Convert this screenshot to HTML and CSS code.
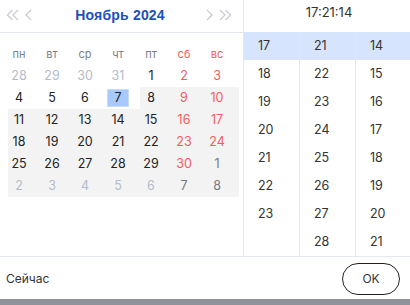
FILE: index.html
```html
<!DOCTYPE html>
<html lang="ru">
  <head>
    <meta charset="UTF-8" />
    <title>Выбор даты</title>
    <link rel="stylesheet" href="styles.css">
  </head>
  <body>
    <div class="picker">
      <div class="picker-body">
        <div class="date-panel">
          <header class="date-header">
            <div class="nav">
              <svg class="nav-btn dbl" width="13" height="12" viewBox="0 0 13 12">
                <path d="M6.5 1 L1.5 6 L6.5 11 M12 1 L7 6 L12 11" />
              </svg>
              <svg class="nav-btn" width="7" height="12" viewBox="0 0 7 12">
                <path d="M6 1 L1 6 L6 11" />
              </svg>
            </div>
            <h1>Ноябрь 2024</h1>
            <div class="nav">
              <svg class="nav-btn" width="7" height="12" viewBox="0 0 7 12">
                <path d="M1 1 L6 6 L1 11" />
              </svg>
              <svg class="nav-btn dbl" width="13" height="12" viewBox="0 0 13 12">
                <path d="M1 1 L6 6 L1 11 M6.5 1 L11.5 6 L6.5 11" />
              </svg>
            </div>
          </header>

          <div class="calendar">
            <div class="week head">
              <div class="cell"><span>пн</span></div>
              <div class="cell"><span>вт</span></div>
              <div class="cell"><span>ср</span></div>
              <div class="cell"><span>чт</span></div>
              <div class="cell"><span>пт</span></div>
              <div class="cell weekend"><span>сб</span></div>
              <div class="cell weekend"><span>вс</span></div>
            </div>
            <div class="week">
              <div class="cell other"><span>28</span></div>
              <div class="cell other"><span>29</span></div>
              <div class="cell other"><span>30</span></div>
              <div class="cell other"><span>31</span></div>
              <div class="cell"><span>1</span></div>
              <div class="cell weekend"><span>2</span></div>
              <div class="cell weekend"><span>3</span></div>
            </div>
            <div class="week">
              <div class="cell"><span>4</span></div>
              <div class="cell"><span>5</span></div>
              <div class="cell"><span>6</span></div>
              <div class="cell selected"><span>7</span></div>
              <div class="cell range"><span>8</span></div>
              <div class="cell weekend range"><span>9</span></div>
              <div class="cell weekend range"><span>10</span></div>
            </div>
            <div class="week range">
              <div class="cell"><span>11</span></div>
              <div class="cell"><span>12</span></div>
              <div class="cell"><span>13</span></div>
              <div class="cell"><span>14</span></div>
              <div class="cell"><span>15</span></div>
              <div class="cell weekend"><span>16</span></div>
              <div class="cell weekend"><span>17</span></div>
            </div>
            <div class="week range">
              <div class="cell"><span>18</span></div>
              <div class="cell"><span>19</span></div>
              <div class="cell"><span>20</span></div>
              <div class="cell"><span>21</span></div>
              <div class="cell"><span>22</span></div>
              <div class="cell weekend"><span>23</span></div>
              <div class="cell weekend"><span>24</span></div>
            </div>
            <div class="week range">
              <div class="cell"><span>25</span></div>
              <div class="cell"><span>26</span></div>
              <div class="cell"><span>27</span></div>
              <div class="cell"><span>28</span></div>
              <div class="cell"><span>29</span></div>
              <div class="cell weekend"><span>30</span></div>
              <div class="cell next"><span>1</span></div>
            </div>
            <div class="week range">
              <div class="cell other"><span>2</span></div>
              <div class="cell other"><span>3</span></div>
              <div class="cell other"><span>4</span></div>
              <div class="cell other"><span>5</span></div>
              <div class="cell other"><span>6</span></div>
              <div class="cell next"><span>7</span></div>
              <div class="cell next"><span>8</span></div>
            </div>
          </div>
        </div>

        <div class="time-panel">
          <div class="time-header">17:21:14</div>
          <div class="time-columns">
            <ul class="time-col">
              <li class="active">17</li>
              <li>18</li>
              <li>19</li>
              <li>20</li>
              <li>21</li>
              <li>22</li>
              <li>23</li>
            </ul>
            <ul class="time-col">
              <li class="active">21</li>
              <li>22</li>
              <li>23</li>
              <li>24</li>
              <li>25</li>
              <li>26</li>
              <li>27</li>
              <li>28</li>
            </ul>
            <ul class="time-col">
              <li class="active">14</li>
              <li>15</li>
              <li>16</li>
              <li>17</li>
              <li>18</li>
              <li>19</li>
              <li>20</li>
              <li>21</li>
            </ul>
          </div>
        </div>
      </div>

      <footer class="picker-footer">
        <span class="now-link">Сейчас</span>
        <button class="ok-btn">OK</button>
      </footer>
    </div>
    <div class="bottom-bar"></div>
  </body>
</html>
```

FILE: styles.css
```css
* {
  margin: 0;
  padding: 0;
  box-sizing: border-box;
  font-family: Inter, "Noto Sans", sans-serif;
}

body {
  background: white;
  width: 410px;
  height: 305px;
  overflow: hidden;
}

.picker {
  height: 299px;
  display: flex;
  flex-direction: column;
  background: white;
}

.picker-body {
  display: flex;
  height: 257px;
  border-bottom: 1px solid #e3e8f0;
}

/* date side */

.date-panel {
  width: 244px;
  flex-shrink: 0;
  border-right: 1px solid #e3e8f0;
}

.date-header {
  height: 33px;
  border-bottom: 1px solid #e3e8f0;
  display: flex;
  align-items: center;
  justify-content: space-between;
  padding: 0 11px 2px 6px;
}

.date-header h1 {
  font-size: 14px;
  font-weight: 700;
  color: #1d4fbd;
  font-family: "Liberation Sans", Arial, sans-serif;
  letter-spacing: 0.2px;
  margin-left: 2px;
}

.nav {
  display: flex;
  align-items: center;
  gap: 6px;
}

.nav-btn {
  fill: none;
  stroke: #c4c9d2;
  stroke-width: 1.2;
}

.calendar {
  padding: 10px 0 0 8px;
}

.week {
  display: grid;
  grid-template-columns: repeat(7, 33px);
  height: 22px;
  align-items: center;
}

.week.range {
  background: #f3f3f4;
  width: 231px;
}

.cell {
  height: 22px;
  display: flex;
  align-items: center;
}

.cell.range {
  background: #f3f3f4;
}

.cell span {
  width: 22px;
  height: 18px;
  line-height: 18px;
  text-align: center;
  font-size: 12.5px;
  color: #222;
}

.week.head .cell span {
  font-size: 11px;
  color: #7a808a;
}

.cell.weekend span,
.week.head .cell.weekend span {
  color: #f25c5c;
}

.cell.other span {
  color: #b3bbca;
}

.cell.next span {
  color: #747a86;
}

.cell.selected span {
  background: #a8c9fc;
  box-shadow: inset 0 0 0 1px #c6daf9;
}

/* time side */

.time-panel {
  flex: 1;
  display: flex;
  flex-direction: column;
}

.time-header {
  height: 32px;
  text-align: center;
  font-size: 13px;
  color: #333;
  padding-top: 4px;
  padding-left: 2px;
}

.time-columns {
  flex: 1;
  display: flex;
}

.time-col {
  list-style: none;
  width: 56px;
  border-right: 1px solid #e3e8f0;
}

.time-col:last-child {
  border-right: none;
  flex: 1;
}

.time-col li {
  height: 28px;
  line-height: 28px;
  padding-left: 14px;
  font-size: 12.5px;
  color: #333;
}

.time-col li.active {
  background: #d6e5fd;
}

/* footer */

.picker-footer {
  flex: 1;
  display: flex;
  align-items: center;
  justify-content: space-between;
  padding: 0 10px 0 6px;
}

.now-link {
  font-size: 12px;
  color: #333;
}

.ok-btn {
  width: 58px;
  height: 32px;
  border: 1px solid #222;
  border-radius: 16px;
  background: white;
  font-size: 12px;
  color: #333;
  margin-top: 1px;
}

.bottom-bar {
  height: 6px;
  background: #8f9399;
}
```
